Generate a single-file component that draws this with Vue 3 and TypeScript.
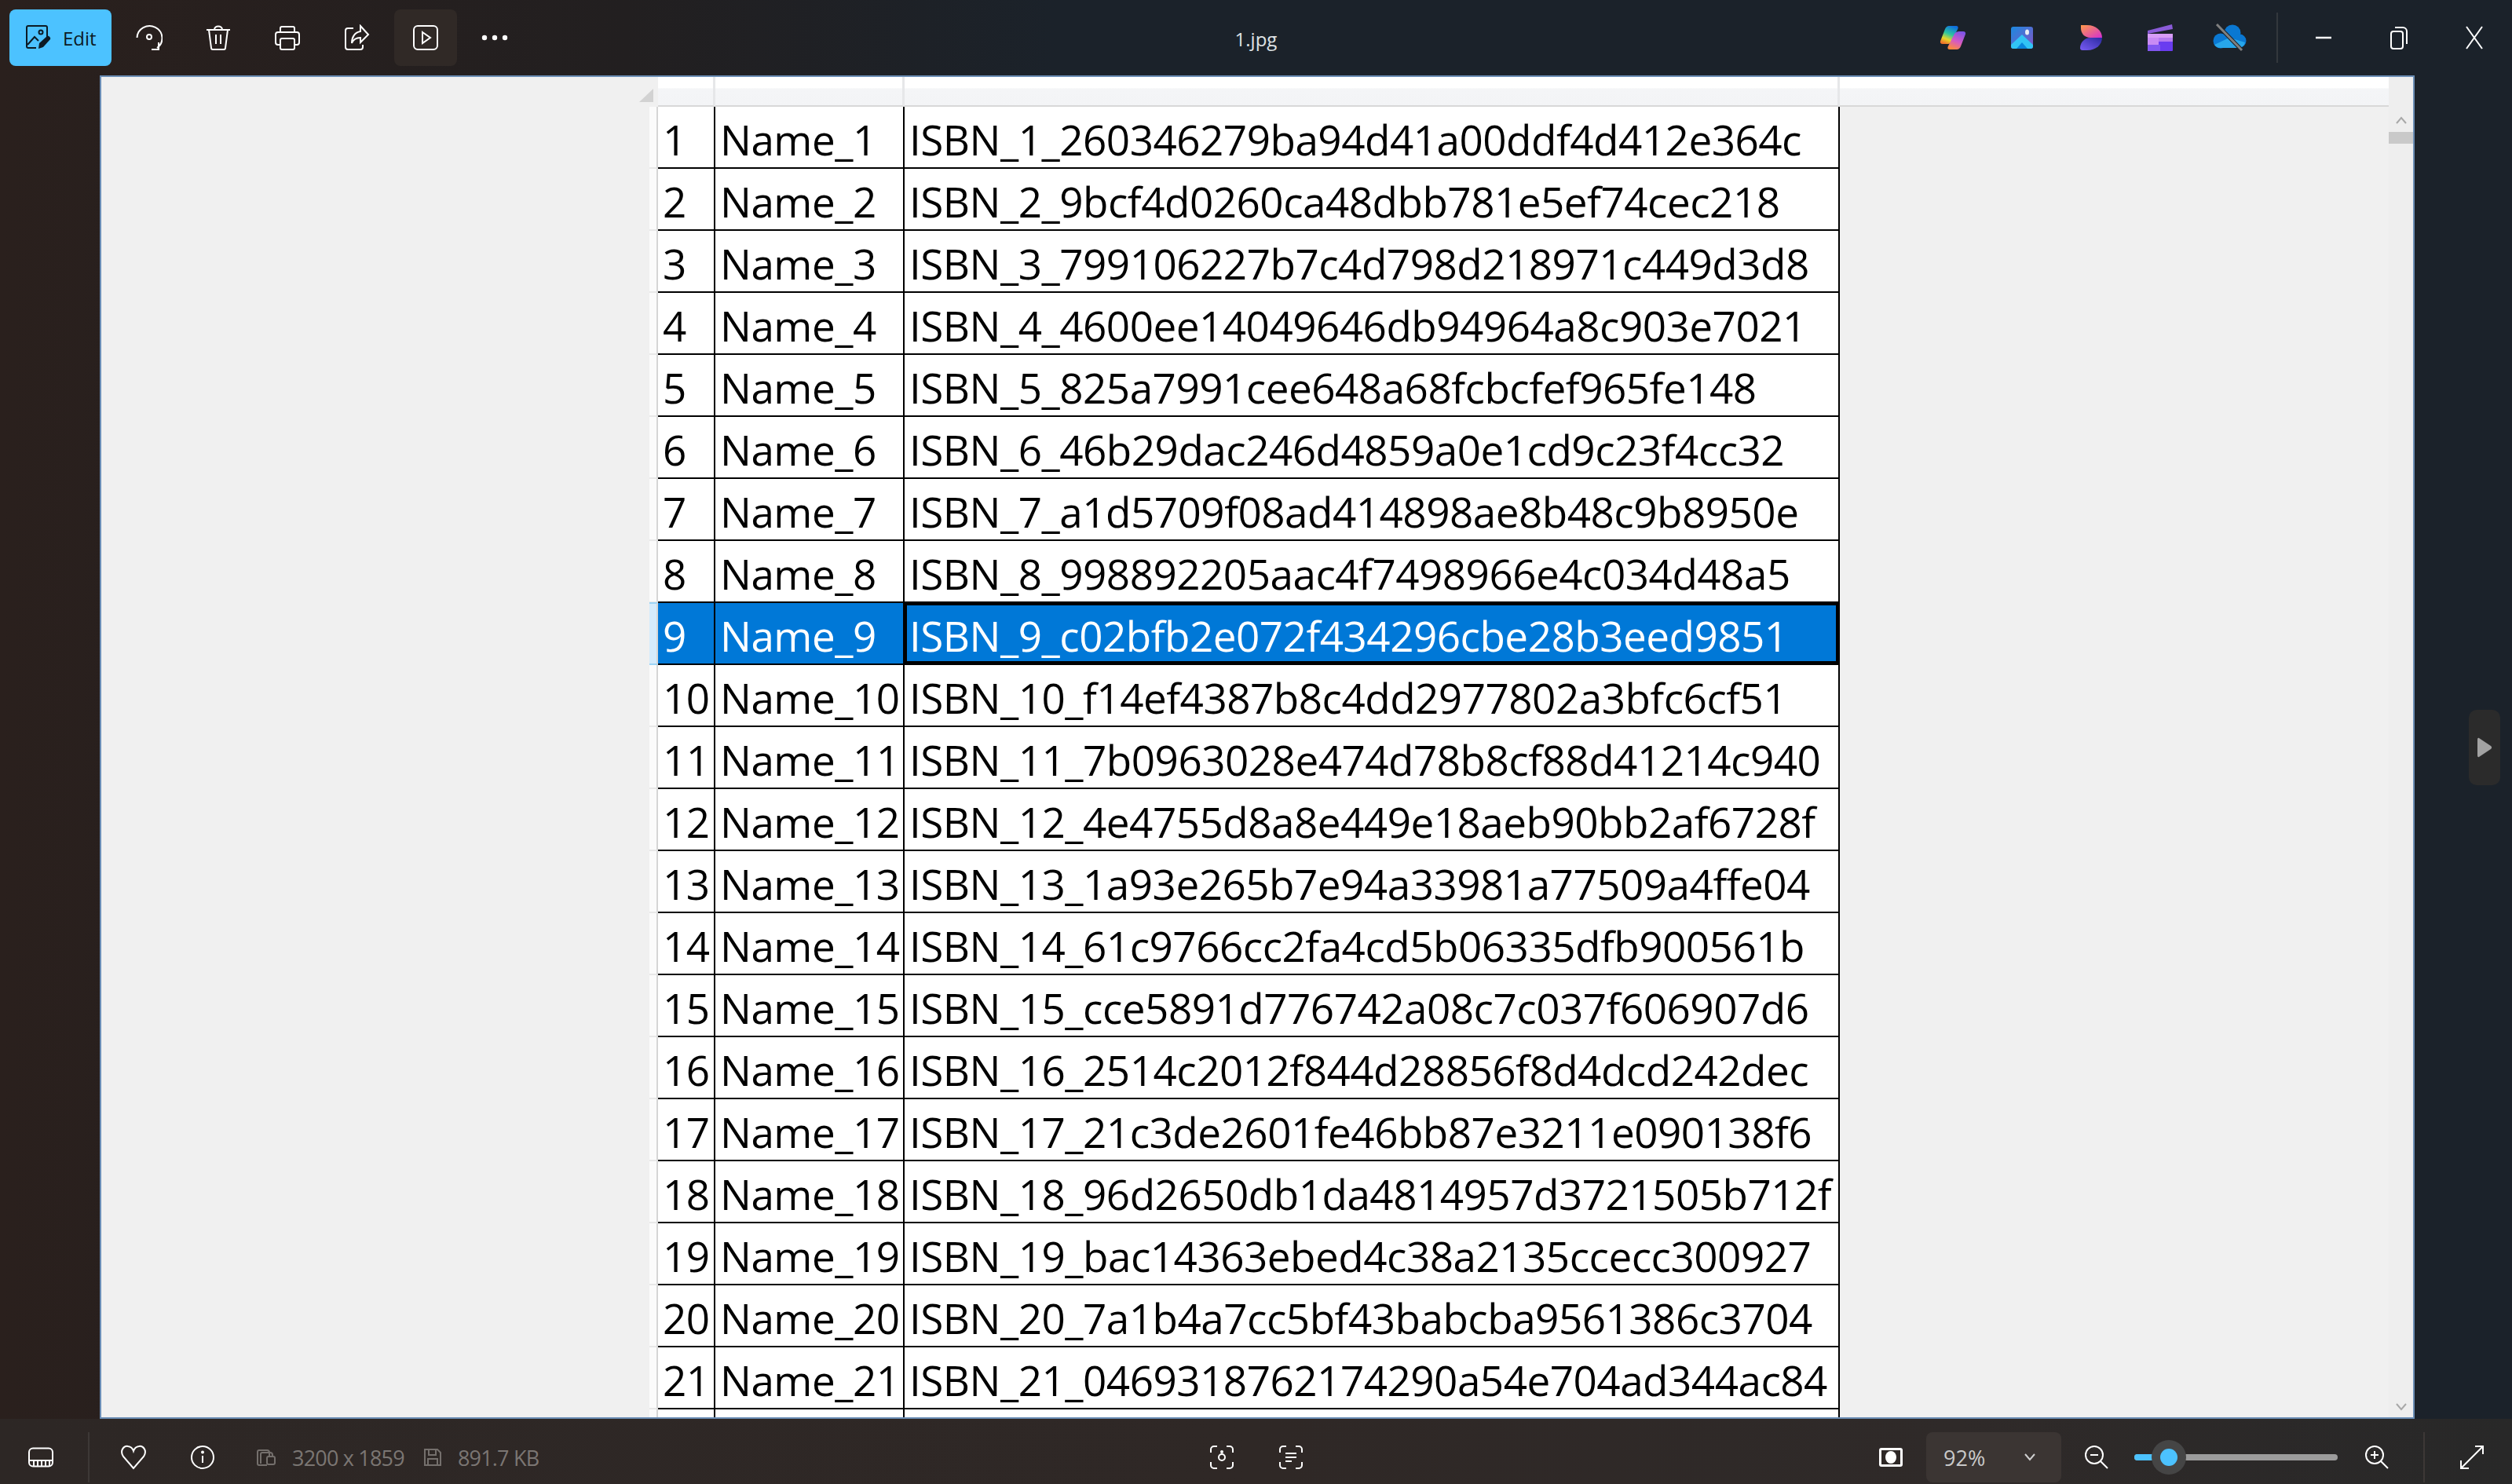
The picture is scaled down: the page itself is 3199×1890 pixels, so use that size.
<script setup lang="ts">
const hashes: string[] = [
  '260346279ba94d41a00ddf4d412e364c','9bcf4d0260ca48dbb781e5ef74cec218','799106227b7c4d798d218971c449d3d8',
  '4600ee14049646db94964a8c903e7021','825a7991cee648a68fcbcfef965fe148','46b29dac246d4859a0e1cd9c23f4cc32',
  'a1d5709f08ad414898ae8b48c9b8950e','998892205aac4f7498966e4c034d48a5','c02bfb2e072f434296cbe28b3eed9851',
  'f14ef4387b8c4dd2977802a3bfc6cf51','7b0963028e474d78b8cf88d41214c940','4e4755d8a8e449e18aeb90bb2af6728f',
  '1a93e265b7e94a33981a77509a4ffe04','61c9766cc2fa4cd5b06335dfb900561b','cce5891d776742a08c7c037f606907d6',
  '2514c2012f844d28856f8d4dcd242dec','21c3de2601fe46bb87e3211e090138f6','96d2650db1da4814957d3721505b712f',
  'bac14363ebed4c38a2135ccecc300927','7a1b4a7cc5bf43babcba9561386c3704','0469318762174290a54e704ad344ac84'
]
const rows = hashes.map((h, i) => ({ id: i + 1, name: `Name_${i + 1}`, isbn: `ISBN_${i + 1}_${h}`, selected: i === 8 }))
</script>

<template>
  <div class="app">
    <header class="top">
      <div class="group">
        <button class="edit">
          <svg width="34" height="34" viewBox="0 0 34 34" fill="none" stroke="#0c1a24" stroke-width="2">
            <path d="M14 30H4a2 2 0 0 1-2-2V4a2 2 0 0 1 2-2h22a2 2 0 0 1 2 2v12"/>
            <path d="M3 26l9-10 5 5"/><circle cx="20" cy="10" r="2.5"/>
            <path d="M17 31l1-7 10-9c2-1 5 2 4 4l-9 10z" fill="#0c1a24" stroke="none"/>
          </svg>
          <span>Edit</span>
        </button>
        <button class="ib">
          <svg width="34" height="34" viewBox="0 0 34 34" fill="none" stroke="#fff" stroke-width="2">
            <path d="M1.500 17A16 15.500 0 1 1 27 30"/><path d="M29 23v9H20"/><circle cx="17" cy="16" r="3"/>
          </svg>
        </button>
        <button class="ib">
          <svg width="34" height="34" viewBox="0 0 34 34" fill="none" stroke="#fff" stroke-width="2">
            <path d="M2 7h30M12 7c0-6 10-6 10 0M5 7l3 23a2 2 0 0 0 2 2h14a2 2 0 0 0 2-2l3-23M14 13v12M20 13v12"/>
          </svg>
        </button>
        <button class="ib">
          <svg width="34" height="34" viewBox="0 0 34 34" fill="none" stroke="#fff" stroke-width="2">
            <path d="M8 10V5a2 2 0 0 1 2-2h14a2 2 0 0 1 2 2v5"/>
            <path d="M8 26H5a3 3 0 0 1-3-3V13a3 3 0 0 1 3-3h24a3 3 0 0 1 3 3v10a3 3 0 0 1-3 3h-3"/>
            <rect x="8" y="18" width="18" height="14" rx="2"/>
          </svg>
        </button>
        <button class="ib">
          <svg width="34" height="34" viewBox="0 0 34 34" fill="none" stroke="#fff" stroke-width="2">
            <path d="M13 5H6a3 3 0 0 0-3 3v21a3 3 0 0 0 3 3h16a3 3 0 0 0 3-3v-3"/>
            <path d="M22 2l10 11-10 10v-6c-5 0-9 2-11 7 0-8 4-14 11-15z"/>
          </svg>
        </button>
        <button class="ib active">
          <svg width="34" height="34" viewBox="0 0 34 34" fill="none" stroke="#fff" stroke-width="2">
            <rect x="2" y="2" width="30" height="30" rx="5"/><path d="M13 10l10 7-10 7z"/>
          </svg>
        </button>
        <button class="ib">
          <svg width="34" height="10" viewBox="0 0 34 10" fill="#fff">
            <circle cx="4" cy="5" r="3.2"/><circle cx="17" cy="5" r="3.2"/><circle cx="30" cy="5" r="3.2"/>
          </svg>
        </button>
      </div>
      <div class="title">1.jpg</div>
      <div class="group right">
        <button class="ib">
          <svg width="34" height="32" viewBox="0 0 34 32">
            <defs>
              <linearGradient id="cp1" x1="0.7" y1="0" x2="0.3" y2="1">
                <stop offset="0" stop-color="#0f6fe0"/><stop offset="0.45" stop-color="#2cc5a0"/><stop offset="0.75" stop-color="#e6d72a"/><stop offset="1" stop-color="#f0742a"/>
              </linearGradient>
              <linearGradient id="cp2" x1="0.7" y1="0" x2="0.3" y2="1">
                <stop offset="0" stop-color="#7d54e6"/><stop offset="0.55" stop-color="#d65ac4"/><stop offset="1" stop-color="#ff8a3c"/>
              </linearGradient>
            </defs>
            <path d="M12 1h9c2.500 0 3 1.500 2.400 3.500L15 21c-1 2-2 3-4 3H4c-2.500 0-3.500-1.500-3-3.500L7 5c1-2.500 3-4 5-4z" fill="url(#cp1)"/>
            <path d="M25 8h5c2.500 0 3.500 1.500 3 3.500L27 27c-1 2.500-3 4-5 4h-9c-2.500 0-3-1.500-2.400-3.500L19 11c1-2 4-3 6-3z" fill="url(#cp2)"/>
          </svg>
        </button>
        <button class="ib">
          <svg width="30" height="30" viewBox="0 0 30 30">
            <defs>
              <linearGradient id="ph1" x1="0" y1="0" x2="1" y2="1">
                <stop offset="0" stop-color="#1b8ae0"/><stop offset="1" stop-color="#8553c4"/>
              </linearGradient>
            </defs>
            <rect x="1" y="1" width="28" height="28" rx="3" fill="url(#ph1)"/>
            <path d="M1 24L15 11l14 13v2a3 3 0 0 1-3 3H4a3 3 0 0 1-3-3z" fill="#31c4f5"/>
            <path d="M8 29l7-8 7 8z" fill="#0a86dc"/>
            <ellipse cx="21.500" cy="8" rx="2.500" ry="3.500" fill="#e9eef5"/>
          </svg>
        </button>
        <button class="ib">
          <svg width="30" height="34" viewBox="0 0 30 34">
            <defs>
              <linearGradient id="de1" x1="0" y1="0" x2="1" y2="1">
                <stop offset="0" stop-color="#ff9a4a"/><stop offset="1" stop-color="#d42fd0"/>
              </linearGradient>
              <linearGradient id="de2" x1="0" y1="1" x2="1" y2="0">
                <stop offset="0" stop-color="#7a5cf5"/><stop offset="1" stop-color="#2a2aa0"/>
              </linearGradient>
            </defs>
            <path d="M2 1h8c11 0 19 7 19 16H14C7 17 2 12 2 5z" fill="url(#de1)"/>
            <path d="M14 17h15c0 9-8 16-19 16H4c-2 0-3-1-3-3 0-7 6-13 13-13z" fill="url(#de2)"/>
          </svg>
        </button>
        <button class="ib">
          <svg width="34" height="34" viewBox="0 0 34 34">
            <path d="M1 8L32 0l1 6L1 12z" fill="#8a5bd8"/>
            <rect x="1" y="12" width="32" height="10" fill="#d79cf7"/>
            <rect x="1" y="20" width="32" height="14" rx="1" fill="#6a3cf0"/>
            <rect x="1" y="17" width="14" height="9" fill="#c98bf4"/>
            <rect x="15" y="17" width="18" height="5" fill="#b57bf0"/>
            <rect x="1" y="26" width="16" height="8" fill="#8257f0"/>
          </svg>
        </button>
        <button class="ib">
          <svg width="44" height="36" viewBox="0 0 44 36">
            <circle cx="26" cy="12" r="10.500" fill="#0a78d2"/>
            <circle cx="11" cy="22" r="9.500" fill="#0a78d2"/>
            <circle cx="35" cy="22" r="8.500" fill="#0a78d2"/>
            <path d="M3 27l19-9 20 6a8 8 0 0 1-8 7H11a9 9 0 0 1-8-4z" fill="#27a6ea"/>
            <path d="M6 1l32 33" stroke="#1b222a" stroke-width="5"/>
            <path d="M6 1l32 33" stroke="#808080" stroke-width="3"/>
          </svg>
        </button>
        <div class="vr top-vr"></div>
        <button class="wb">
          <svg width="22" height="4" viewBox="0 0 22 4"><path d="M1 2h20" stroke="#fff" stroke-width="2.500"/></svg>
        </button>
        <button class="wb">
          <svg width="24" height="32" viewBox="0 0 24 32" fill="none" stroke="#fff" stroke-width="2">
            <rect x="2" y="8" width="15" height="22" rx="3"/><path d="M7 3h10a5 5 0 0 1 5 5v16"/>
          </svg>
        </button>
        <button class="wb">
          <svg width="24" height="32" viewBox="0 0 24 32" fill="none" stroke="#fff" stroke-width="2"><path d="M2 2l20 28M22 2L2 30"/></svg>
        </button>
      </div>
    </header>

    <main class="main">
      <section class="canvas">
        <div class="blank"><div class="corner"></div></div>
        <div class="sheet">
          <div class="h-gut"></div>
          <div class="h"></div>
          <div class="h"></div>
          <div class="h"></div>
          <div class="h last"></div>
          <template v-for="r in rows" :key="r.id">
            <div class="gut" :class="{ on: r.selected }"></div>
            <div class="c" :class="{ sel: r.selected }">{{ r.id }}</div>
            <div class="c" :class="{ sel: r.selected }">{{ r.name }}</div>
            <div class="c" :class="{ sel: r.selected, cur: r.selected }">{{ r.isbn }}</div>
            <div></div>
          </template>
          <div class="gut"></div>
          <div class="c"></div>
          <div class="c"></div>
          <div class="c"></div>
          <div></div>
        </div>
        <div class="scroll">
          <svg class="up" width="14" height="10" viewBox="0 0 14 10" fill="none" stroke="#a8a8a8" stroke-width="2"><path d="M1 9l6-7 6 7"/></svg>
          <div class="thumb"></div>
          <svg class="down" width="14" height="10" viewBox="0 0 14 10" fill="none" stroke="#a8a8a8" stroke-width="2"><path d="M1 1l6 7 6-7"/></svg>
        </div>
      </section>
      <aside class="rail">
        <div class="next">
          <svg width="20" height="26" viewBox="0 0 20 26"><path d="M3 1l15 10c1.500 1 1.500 3 0 4L3 25c-1 .5-2 0-2-2V3c0-2 1-2.500 2-2z" fill="#a3a3a3"/></svg>
        </div>
      </aside>
    </main>

    <footer class="bottom">
      <div class="bgroup">
        <button class="bb">
          <svg width="34" height="26" viewBox="0 0 34 26" fill="none" stroke="#fff" stroke-width="2">
            <rect x="2" y="1.500" width="30" height="23" rx="5"/><path d="M2 17h30M8 17v7M13 17v7M18 17v7M23 17v7M28 17v7"/>
          </svg>
        </button>
        <div class="vr b-vr"></div>
        <button class="bb">
          <svg width="34" height="32" viewBox="0 0 34 32" fill="none" stroke="#fff" stroke-width="2">
            <path d="M17 30L4 15C-1 7 5 1 10 2c4 .5 6 3 7 6 1-3 3-5.500 7-6 5-1 11 5 6 13z"/>
          </svg>
        </button>
        <button class="bb">
          <svg width="32" height="32" viewBox="0 0 32 32" fill="none" stroke="#fff" stroke-width="2">
            <circle cx="16" cy="16" r="14"/><path d="M16 14v9"/><circle cx="16" cy="9.500" r="1" fill="#fff"/>
          </svg>
        </button>
        <svg class="meta-i first" width="26" height="22" viewBox="0 0 26 22" fill="none" stroke="#746f6c" stroke-width="2">
          <path d="M14 21H4a2 2 0 0 1-2-2V4a2 2 0 0 1 2-2h10a3 3 0 0 1 3 3v5"/><path d="M6 19V7a2 2 0 0 1 2-2h10a3 3 0 0 1 3 3v2"/>
          <rect x="14" y="10" width="10" height="10" rx="2"/>
        </svg>
        <span class="meta">3200 x 1859</span>
        <svg class="meta-i" width="24" height="24" viewBox="0 0 24 24" fill="none" stroke="#746f6c" stroke-width="2">
          <path d="M2 2h16l4 4v16H2z"/><path d="M7 2v7h9V2M6 22v-8h12v8"/>
        </svg>
        <span class="meta">891.7 KB</span>
      </div>
      <div class="bgroup center">
        <button class="bb">
          <svg width="32" height="32" viewBox="0 0 32 32" fill="none" stroke="#fff" stroke-width="2">
            <path d="M2 10V6a4 4 0 0 1 4-4h4M22 2h4a4 4 0 0 1 4 4v4M30 22v4a4 4 0 0 1-4 4h-4M10 30H6a4 4 0 0 1-4-4v-4"/>
            <circle cx="16" cy="16" r="4"/><circle cx="16" cy="9" r="1" fill="#fff"/>
          </svg>
        </button>
        <button class="bb">
          <svg width="32" height="32" viewBox="0 0 32 32" fill="none" stroke="#fff" stroke-width="2">
            <path d="M2 10V6a4 4 0 0 1 4-4h4M22 2h4a4 4 0 0 1 4 4v4M30 22v4a4 4 0 0 1-4 4h-4M10 30H6a4 4 0 0 1-4-4v-4"/>
            <path d="M9 11h14M9 16h14M9 21h8"/>
          </svg>
        </button>
      </div>
      <div class="bgroup end">
        <button class="bb">
          <svg width="32" height="26" viewBox="0 0 32 26">
            <rect x="1" y="1" width="30" height="24" rx="3" fill="#fff"/>
            <rect x="4" y="4" width="24" height="18" fill="#2e2826"/>
            <ellipse cx="16" cy="13" rx="7" ry="8" fill="#fff"/>
          </svg>
        </button>
        <div class="zoombox">
          <span>92%</span>
          <svg width="16" height="10" viewBox="0 0 16 10" fill="none" stroke="#d0d0d0" stroke-width="2"><path d="M2 1l6 7 6-7"/></svg>
        </div>
        <button class="mag">
          <svg width="32" height="32" viewBox="0 0 32 32" fill="none" stroke="#fff" stroke-width="2">
            <circle cx="13" cy="13" r="11"/><path d="M21 21l9 9M8 13h10"/>
          </svg>
        </button>
        <div class="slider">
          <div class="fill"></div>
          <div class="knob"><div class="dot"></div></div>
        </div>
        <button class="mag plus">
          <svg width="32" height="32" viewBox="0 0 32 32" fill="none" stroke="#fff" stroke-width="2">
            <circle cx="13" cy="13" r="11"/><path d="M21 21l9 9M8 13h10M13 8v10"/>
          </svg>
        </button>
        <div class="vr b-vr right-vr"></div>
        <button class="bb">
          <svg width="32" height="32" viewBox="0 0 32 32" fill="none" stroke="#fff" stroke-width="2">
            <path d="M20 2h10v10M30 2L2 30M2 20v10h10"/>
          </svg>
        </button>
      </div>
    </footer>
  </div>
</template>

<style scoped>
.app {
  width: 3199px;
  height: 1890px;
  display: flex;
  flex-direction: column;
  overflow: hidden;
  background: linear-gradient(90deg, #2a201d 0, #221f20 25%, #1b222a 42%, #1b222a 100%);
  font-family: "Open Sans", "Noto Sans", sans-serif;
}
button {
  border: 0;
  background: none;
  padding: 0;
  margin: 0;
  display: flex;
  align-items: center;
  justify-content: center;
  font-family: inherit;
}
.top {
  height: 96px;
  flex: none;
  display: grid;
  grid-template-columns: 1fr auto 1fr;
  align-items: start;
}
.group {
  display: flex;
  gap: 8px;
  padding: 12px 0 0 12px;
  align-items: center;
}
.group.right {
  justify-content: flex-end;
  padding: 12px 0 0 0;
}
.edit {
  width: 130px;
  height: 72px;
  background: #4cc2ff;
  border-radius: 8px;
  gap: 14px;
  color: #0c1a24;
  font-size: 24px;
  justify-content: flex-start;
  padding-left: 20px;
}
.ib {
  width: 80px;
  height: 72px;
  border-radius: 8px;
}
.ib.active { background: #302926; }
.title {
  color: #dfe2e5;
  font-size: 24px;
  line-height: 34px;
  padding-top: 33px;
}
.vr { background: #33383d; width: 2px; flex: none; }
.top-vr { height: 64px; margin: 0 10px 0 12px; }
.wb { width: 96px; height: 72px; margin-left: -8px; }
.wb:first-of-type { margin-left: 0; }
.main {
  flex: 1;
  min-height: 0;
  display: flex;
  padding-left: 127px;
}
.canvas {
  width: 2948px;
  box-sizing: border-box;
  border: 2px solid #6a8db5;
  background: #f0f0f0;
  display: flex;
  overflow: hidden;
}
.blank {
  width: 698px;
  flex: none;
  position: relative;
}
.corner {
  position: absolute;
  left: 685px;
  top: 15px;
  width: 18px;
  height: 17px;
  background: #d2d2d2;
  clip-path: polygon(100% 0, 100% 100%, 0 100%);
}
.sheet {
  flex: 1;
  display: grid;
  grid-template-columns: 11px 73px 241px 1191px 1fr;
  grid-template-rows: 38px;
  grid-auto-rows: 79px;
  min-width: 0;
}
.h {
  background: linear-gradient(#fff 0, #fff 38%, #f4f5f7 42%, #f3f4f6 100%);
  border-right: 3px solid #e6e7e9;
  border-bottom: 2px solid #d8d8d8;
  box-sizing: border-box;
}
.h.last { border-right: 0; }
.gut {
  background: #fbfbfb;
  border-right: 2px solid #d6d6d6;
  border-bottom: 2px solid #e8e8e8;
  box-sizing: border-box;
}
.gut.on {
  background: #d4ebfc;
  border-top: 2px solid #9cd4f6;
  border-bottom: 2px solid #9cd4f6;
  margin-top: -1px;
}
.c {
  box-sizing: border-box;
  background: #fff;
  border-right: 2px solid #000;
  border-bottom: 2px solid #000;
  color: #000;
  font-size: 53px;
  line-height: 77px;
  padding: 3px 0 0 6px;
  white-space: nowrap;
  overflow: hidden;
  letter-spacing: -0.5px;
}
.c.sel {
  background: #0078d7;
  color: #fff;
}
.c.cur {
  box-shadow: inset 0 0 0 3px #000;
}
.scroll {
  width: 31px;
  flex: none;
  background: #eeeeee;
  display: flex;
  flex-direction: column;
  align-items: center;
}
.up { margin-top: 50px; }
.thumb {
  align-self: stretch;
  height: 15px;
  margin-top: 10px;
  background: #c9c9c9;
}
.down { margin-top: auto; margin-bottom: 8px; }
.rail {
  flex: 1;
  display: flex;
  align-items: center;
  justify-content: flex-end;
  padding-right: 15px;
}
.next {
  width: 40px;
  height: 96px;
  border-radius: 10px;
  background: #2b2b2b;
  display: flex;
  align-items: center;
  justify-content: center;
}
.bottom {
  height: 83px;
  flex: none;
  display: grid;
  grid-template-columns: 1fr auto 1fr;
  background: linear-gradient(90deg, #2d2725 0, #2f2826 50%, #2f2a29 78%, #282828 100%);
  padding-top: 17px;
  box-sizing: border-box;
}
.bgroup {
  display: flex;
  align-items: center;
  height: 64px;
  gap: 8px;
}
.bgroup:first-child { padding-left: 12px; }
.bgroup.end { justify-content: flex-end; gap: 0; padding-right: 11px; }
.bb { width: 80px; height: 64px; flex: none; }
.b-vr { height: 64px; background: #3d3836; margin: 0 8px 0 12px; }
.meta-i.first { margin-left: 20px; }
.meta-i { margin-right: 12px; margin-left: 16px; flex: none; }
.meta {
  color: #7b7673;
  font-size: 27px;
  letter-spacing: -0.8px;
  white-space: nowrap;
}
.zoombox {
  width: 172px;
  height: 64px;
  margin-left: 5px;
  box-sizing: border-box;
  background: #3b3533;
  border-radius: 8px;
  display: flex;
  align-items: center;
  justify-content: space-between;
  padding: 0 32px 0 22px;
  color: #c9c9c9;
  font-size: 27px;
}
.mag { width: 60px; height: 64px; margin-left: 15px; flex: none; }
.mag.plus { margin-left: 20px; }
.slider {
  width: 259px;
  height: 8px;
  margin-left: 18px;
  background: #9c9c9c;
  border-radius: 4px;
  position: relative;
}
.fill {
  width: 44px;
  height: 8px;
  background: #4cc2ff;
  border-radius: 4px 0 0 4px;
}
.knob {
  position: absolute;
  left: 22px;
  top: -18px;
  width: 44px;
  height: 44px;
  border-radius: 50%;
  background: #454545;
  display: flex;
  align-items: center;
  justify-content: center;
}
.dot {
  width: 22px;
  height: 22px;
  border-radius: 50%;
  background: #4cc2ff;
}
.right-vr { margin: 0 20px 0 29px; }
</style>

<style>
html, body { margin: 0; padding: 0; background: #1b222a; }
</style>
